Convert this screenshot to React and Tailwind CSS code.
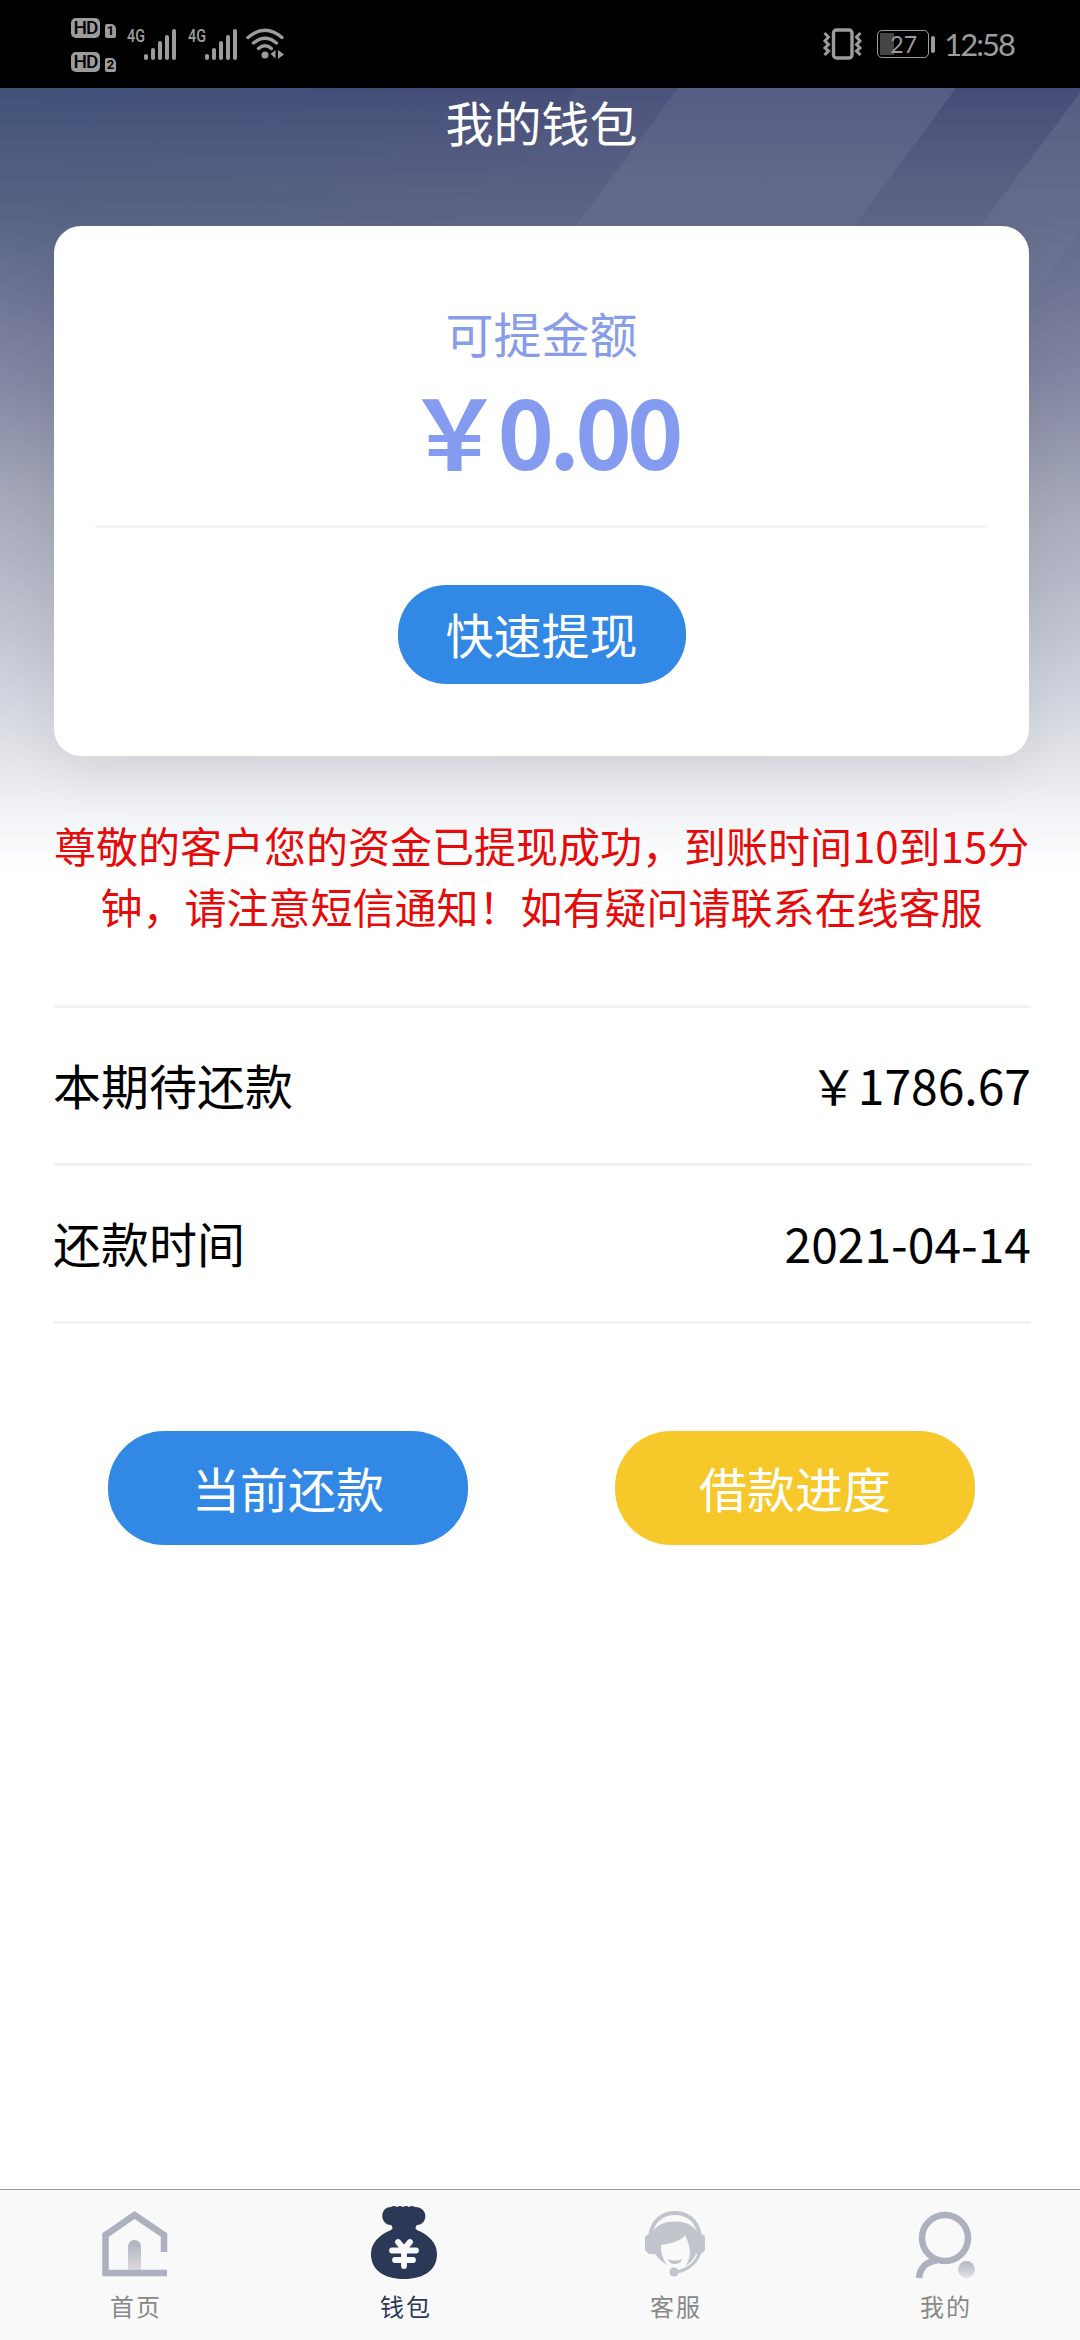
import { useId, useState } from 'react';

const rows = [
  { label: '本期待还款', value: '￥1786.67' },
  { label: '还款时间', value: '2021-04-14' },
];

const tabs = [
  { id: 'home', label: '首页', Icon: HomeIcon },
  { id: 'wallet', label: '钱包', Icon: WalletIcon },
  { id: 'service', label: '客服', Icon: ServiceIcon },
  { id: 'mine', label: '我的', Icon: MineIcon },
];

export default function App() {
  const [active, setActive] = useState('wallet');

  return (
    <div className="flex h-[2340px] w-[1080px] flex-col overflow-hidden bg-white font-['Noto_Sans_CJK_SC',sans-serif]">
      <StatusBar />
      <main className="relative isolate flex flex-1 flex-col pr-[51px] pl-[54px]">
        <Backdrop />
        <h1 className="h-[138px] text-center text-[48px] leading-[66px] font-normal text-white">
          我的钱包
        </h1>

        <section className="flex h-[530px] flex-col items-center rounded-[27px] bg-white px-[41px] pt-[71px] shadow-[0_15px_60px_rgba(0,0,0,0.08)]">
          <p className="text-[48px] leading-[70px] text-[#879de8]">可提金额</p>
          <p className="flex h-[158px] items-start pt-[1px] pl-[2px] text-[96px] leading-[122px] font-bold text-[#859bef]">
            <span>￥</span>
            <span className="-ml-[5px] tracking-[-5px]">0.00</span>
          </p>
          <div className="h-[3px] w-full bg-[#f4f4f5]" />
          <button className="mt-[57px] h-[99px] w-[288px] rounded-[48px] bg-[#3189e5] pb-[3px] text-[48px] leading-none text-white">
            快速提现
          </button>
        </section>

        <p className="mt-[58px] text-center text-[42px] leading-[61px] whitespace-nowrap text-[#e60b0b]">
          尊敬的客户您的资金已提现成功，到账时间10到15分
          <br />
          钟，请注意短信通知！如有疑问请联系在线客服
        </p>

        <dl className="mt-[69px] -mr-[2px] -ml-px border-t-[3px] border-[#f2f2f2]">
          {rows.map((row) => (
            <div
              key={row.label}
              className="flex h-[158px] items-center justify-between border-b-[3px] border-[#f2f2f2] pb-[3px] text-[48px] text-black"
            >
              <dt>{row.label}</dt>
              <dd>{row.value}</dd>
            </div>
          ))}
        </dl>

        <div className="mt-[107px] flex justify-between px-[54px] text-[48px] leading-none text-white">
          <button className="h-[114px] w-[360px] rounded-[56px] bg-[#3189e5] pb-[3px]">
            当前还款
          </button>
          <button className="h-[114px] w-[360px] rounded-[56px] bg-[#f7c829] pb-[3px]">
            借款进度
          </button>
        </div>
      </main>

      <nav className="flex h-[151px] border-t border-[#999] bg-[#f9f9f9]">
        {tabs.map(({ id, label, Icon }) => (
          <button
            key={id}
            onClick={() => setActive(id)}
            className={`flex flex-1 flex-col items-center pt-[14px] text-[24px] leading-[36px] tracking-[2px] ${
              active === id ? 'text-[#2b3856]' : 'text-[#888]'
            }`}
          >
            <Icon />
            <span className="mt-[4px] pl-[2px]">{label}</span>
          </button>
        ))}
      </nav>
    </div>
  );
}

function Backdrop() {
  return (
    <div className="absolute inset-x-0 top-0 -z-10 h-[790px] bg-[linear-gradient(180deg,#444d77_0px,#52597f_60px,#5e6686_130px,#6d7393_190px,#8689a5_300px,#a5a9b9_412px,#bbbecb_512px,#d3d6e0_612px,#e0e2e7_660px,#eef0f4_712px,#fafbfc_762px,#fff_790px)]">
      <svg className="h-full w-full" viewBox="0 0 1080 790" aria-hidden="true">
        <defs>
          <linearGradient id="beam" x1="0" y1="0" x2="0" y2="1">
            <stop offset="0" stopColor="#fff" stopOpacity="0.09" />
            <stop offset="1" stopColor="#fff" stopOpacity="0" />
          </linearGradient>
          <radialGradient id="teal" cx="0" cy="0.15" r="0.85">
            <stop offset="0" stopColor="#355f7c" stopOpacity="0.25" />
            <stop offset="1" stopColor="#355f7c" stopOpacity="0" />
          </radialGradient>
        </defs>
        <path d="M0 0h600v260H0z" fill="url(#teal)" />
        <path d="M577 0H678L600 105H499z" fill="url(#beam)" opacity="0.35" />
        <path d="M678 0H956L780 238H502z" fill="url(#beam)" />
        <path d="M1080 5V144L1000 252L895 252z" fill="url(#beam)" />
      </svg>
    </div>
  );
}

function StatusBar() {
  return (
    <header className="flex h-[88px] items-center justify-between bg-black pr-[66px] pl-[71px] text-[#9c9c9c]">
      <div className="flex items-center">
        <div className="flex flex-col gap-[13px]">
          <HdBadge sim="1" />
          <HdBadge sim="2" />
        </div>
        <Signal className="ml-[11px]" />
        <Signal className="ml-[10px]" />
        <WifiIcon />
      </div>
      <div className="flex items-center">
        <VibrateIcon />
        <div className="ml-[13px] flex h-[28px] w-[52px] items-center rounded-[5px] border-[1.5px] border-current p-[2px]">
          <div className="flex h-full w-[14px] items-center bg-[#454545] pl-[10px]">
            <span className="font-['Lato',sans-serif] text-[23px] leading-none">27</span>
          </div>
        </div>
        <div className="ml-[2px] h-[17px] w-[4px] rounded-[2px] bg-current" />
        <span className="ml-[9px] font-['Lato',sans-serif] text-[31px] leading-none tracking-[-2px]">
          12:58
        </span>
      </div>
    </header>
  );
}

function HdBadge({ sim }) {
  return (
    <div className="flex h-[21px] items-end gap-[5px] font-['Roboto',sans-serif] leading-none text-black">
      <span className="flex h-[20px] w-[29px] items-center justify-center rounded-[5px] bg-[#9c9c9c] text-[19px] font-medium tracking-[-1px]">
        HD
      </span>
      <span className="flex h-[14px] w-[11px] items-center justify-center rounded-[2px] rounded-tr-[5px] bg-[#9c9c9c] text-[13px] font-bold">
        {sim}
      </span>
    </div>
  );
}

function Signal({ className }) {
  return (
    <div className={`flex h-[32px] w-[51px] ${className}`}>
      <span className="w-[17px] origin-left scale-x-80 font-['Roboto',sans-serif] text-[18px] leading-[15px] font-medium">
        4G
      </span>
      <span className="flex items-end gap-[3px]">
        <i className="h-[6px] w-[4px] rounded-full bg-current" />
        <i className="h-[12px] w-[4px] rounded-full bg-current" />
        <i className="h-[19px] w-[4px] rounded-full bg-current" />
        <i className="h-[25px] w-[4px] rounded-full bg-current" />
        <i className="h-[31px] w-[4px] rounded-full bg-current" />
      </span>
    </div>
  );
}

function WifiIcon() {
  return (
    <svg className="ml-[7px] h-[32px] w-[38px]" viewBox="0 0 38 32" fill="none" aria-hidden="true">
      <g stroke="currentColor" strokeWidth="3.4" strokeLinecap="round">
        <path d="M2 9.500Q19-5 36 9.500" />
        <path d="M7.500 15Q19 5.500 30.500 15" />
        <path d="M12.500 20.500Q19 15 25.500 20.500" />
      </g>
      <circle cx="19" cy="27" r="3.500" fill="currentColor" />
      <path d="M29.500 22v8.500L24.500 26zM32 22l6 4.500L32 31z" fill="currentColor" />
    </svg>
  );
}

function VibrateIcon() {
  return (
    <svg className="h-[32px] w-[42px]" viewBox="0 0 42 32" fill="none" stroke="currentColor" aria-hidden="true">
      <rect x="11.500" y="2" width="18.500" height="28" rx="3" strokeWidth="3.400" />
      <path
        d="M2.500 5l4 4-3.500 4 3.500 3.500L3 20l3.500 3-4 4M38.500 5l-4 4 3.500 4-3.500 3.500L38 20l-3.500 3 4 4"
        strokeWidth="3"
      />
    </svg>
  );
}

function HomeIcon() {
  const id = useId();
  return (
    <svg className="h-[80px] w-[80px]" viewBox="0 0 80 80" fill="none" aria-hidden="true">
      <defs>
        <linearGradient id={id} x1="0" y1="0" x2="0" y2="1">
          <stop offset="0" stopColor="#acb0bf" />
          <stop offset="1" stopColor="#dcdcde" />
        </linearGradient>
      </defs>
      <path d="M33 66V42.500a6.500 6.500 0 0 1 13 0V66z" fill={`url(#${id})`} />
      <path d="M72 69H10.500V31L39.500 11 69 31V48" stroke="#acb0bf" strokeWidth="6.500" />
    </svg>
  );
}

function WalletIcon() {
  return (
    <svg className="h-[80px] w-[80px]" viewBox="0 0 80 80" aria-hidden="true">
      <path
        d="M26 3Q29 1 32 3Q35 1 38 3Q41 1 44 3Q47 1 50 3C64 3 63 21 52 21Q49 24 52 26C64 31 72 39 72 50C72 66 59 75 39 75S6 66 6 50C6 39 14 31 26 26Q29 24 26 21C15 21 14 3 26 3z"
        fill="#2b3856"
      />
      <path
        d="M33 38l6 7 6-7M27 46.500H51M30 56H48M39 46V62"
        fill="none"
        stroke="#f9f9f9"
        strokeWidth="5.800"
        strokeLinecap="round"
        strokeLinejoin="round"
      />
    </svg>
  );
}

function ServiceIcon() {
  return (
    <svg className="h-[80px] w-[80px]" viewBox="0 0 80 80" fill="none" aria-hidden="true">
      <path d="M15.500 30C18 16 28 9 40 9s22 7 24.500 21" stroke="#c0c4cc" strokeWidth="4" />
      <path
        d="M10 33q2-3 7-4C22 20 30 17.500 40 17.500s18 3 23 11.500q6 1 7 4v13q-2 4-9 4-3 7-10 12Q57 50 54 42q-1-5-4-11Q46 38 26 41q-1 10 6 20-8-5-12-11-7 1-8-2l-2-2z"
        fill="#c0c4cc"
      />
      <path d="M33 55q7 3 14 0-1 5-7 5t-7-5" fill="#c0c4cc" />
      <path d="M65 48Q60 64 42 68" stroke="#c0c4cc" strokeWidth="3" />
      <circle cx="39" cy="68" r="4.500" fill="#c0c4cc" />
    </svg>
  );
}

function MineIcon() {
  const id = useId();
  return (
    <svg className="h-[80px] w-[80px]" viewBox="0 0 80 80" fill="none" aria-hidden="true">
      <defs>
        <linearGradient id={id} x1="0" y1="0" x2="0" y2="1">
          <stop offset="0" stopColor="#b3b6c3" />
          <stop offset="1" stopColor="#e2e2e4" />
        </linearGradient>
      </defs>
      <circle cx="40" cy="34" r="23" stroke="#acb0bf" strokeWidth="6.500" />
      <path d="M14 74C15 64 21 57.500 32 56.500" stroke="#acb0bf" strokeWidth="6.500" />
      <circle cx="61.500" cy="65.500" r="8.500" fill={`url(#${id})`} />
    </svg>
  );
}
